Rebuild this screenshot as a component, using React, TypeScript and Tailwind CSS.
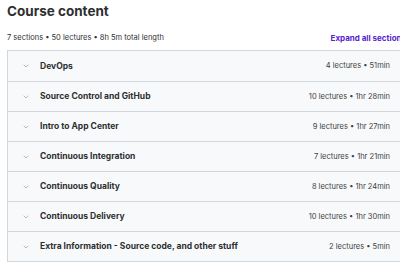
import { ChevronDown } from "lucide-react";

const sections = [
  { title: "DevOps", meta: "4 lectures • 51min" },
  { title: "Source Control and GitHub", meta: "10 lectures • 1hr 28min" },
  { title: "Intro to App Center", meta: "9 lectures • 1hr 27min" },
  { title: "Continuous Integration", meta: "7 lectures • 1hr 21min" },
  { title: "Continuous Quality", meta: "8 lectures • 1hr 24min" },
  { title: "Continuous Delivery", meta: "10 lectures • 1hr 30min" },
  { title: "Extra Information - Source code, and other stuff", meta: "2 lectures • 5min" },
];

export default function App() {
  return (
    <div className="w-[406px] bg-white pl-[7px] font-['Inter',sans-serif] text-[#2d2f31]">
      <h2 className="pt-[2px] text-[13.5px] font-bold leading-[18px]">Course content</h2>

      <div className="mt-[13px] flex items-center justify-between text-[7.5px] leading-[10px] text-[#2d2f31]">
        <span>7 sections • 50 lectures • 8h 5m total length</span>
        <button type="button" className="text-[8px] font-bold text-[#5624d0]">
          Expand all sections
        </button>
      </div>

      <div className="mt-[7px] border border-[#d1d7dc]">
        {sections.map((s, i) => (
          <div
            key={s.title}
            className={`flex h-[30px] items-center bg-[#f7f9fa] pl-[14px] pr-[15px] ${i > 0 ? "border-t border-[#d1d7dc]" : ""}`}
          >
            <ChevronDown className="mr-[10px] size-[8px] text-[#8a8f93]" strokeWidth={1.75} />
            <span className="flex-1 text-[8.5px] font-bold">{s.title}</span>
            <span className="text-[7.5px] text-[#3e4143]">{s.meta}</span>
          </div>
        ))}
      </div>
    </div>
  );
}
